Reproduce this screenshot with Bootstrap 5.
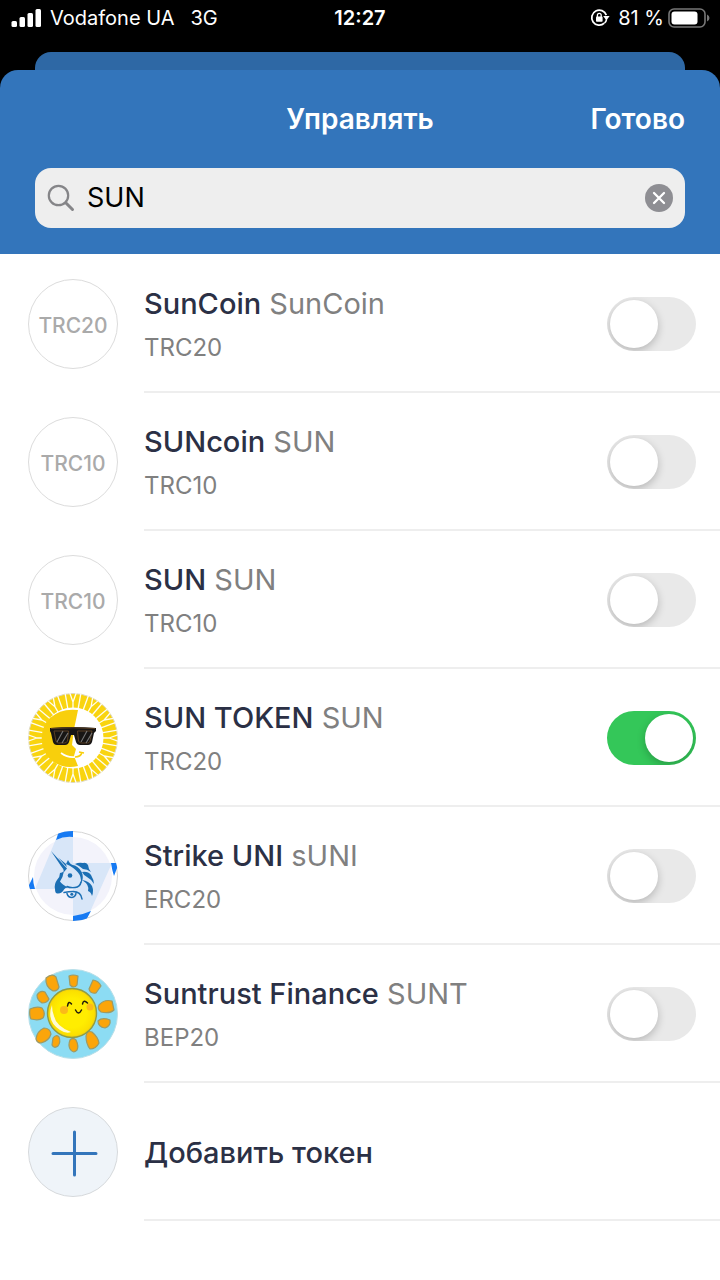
<!DOCTYPE html>
<html lang="ru">
<head>
<meta charset="utf-8">
<meta name="viewport" content="width=device-width, initial-scale=1">
<title>Управлять</title>
<link href="https://cdn.jsdelivr.net/npm/bootstrap@5.3.0/dist/css/bootstrap.min.css" rel="stylesheet">
<style>
  body { font-family: Inter, "Noto Sans", sans-serif; color: #2b3045; background: #fff; }
  svg { display: block; flex: none; }
  .top-zone { background: #000; }
  .status-bar { height: 36px; font-size: 20px; line-height: 36px; padding: 0 10px; color: #fff; }
  .status-side { flex: 1 1 0; }
  .back-sheet { height: 18px; margin: 0 35px; background: #2e68a5; border-radius: 16px 16px 0 0; }
  .sheet-head { background: #3375bb; border-radius: 18px 18px 0 0; padding: 26px 35px; }
  .sheet-bar { display: grid; grid-template-columns: 1fr auto 1fr; height: 46px; font-size: 28px; line-height: 46px; font-weight: 600; color: #fff; }
  .sheet-bar h1, .sheet-bar button { font: inherit; color: inherit; }
  .search-box { height: 60px; margin-top: 26px; padding: 0 12px; background: #eee; border-radius: 16px; }
  .search-box input { font-size: 27px; color: #000; margin-left: 12px; outline: 0; min-width: 0; }
  .token-row { padding-left: 28px; }
  .token-list { padding-top: 1px; }
  .token-line { height: 138px; margin-left: 26px; padding-right: 24px; border-bottom: 2px solid #eee; }
  .coin { width: 90px; height: 90px; flex: none; border: 1px solid #dcdcdc; border-radius: 50%; color: #aaa; font-size: 21px; font-weight: 500; padding-top: 4px; }
  .token-line label, .token-line button { padding-top: 3px; }
  .token-name { font-size: 29px; line-height: 40px; }
  .token-name b { font-weight: 500; }
  .token-name span, .token-type { color: #808080; }
  .token-type { font-size: 24px; line-height: 34px; margin-top: 7px; }
  .form-check-input.toggle { width: 89px; height: 54px; margin: 2px 0 0; padding: 3px; border: 0; border-radius: 27px; background: #e9e9e9; flex: none; overflow: hidden; }
  .toggle::before { content: ""; display: block; width: 48px; height: 48px; border-radius: 50%; background: #fff; box-shadow: 0 3px 8px #00000038; }
  .form-check-input.toggle:checked { background: #34c759; }
  .toggle:checked::before { margin-left: 35px; }
</style>
</head>
<body>
<header class="top-zone">
  <div class="status-bar d-flex align-items-center">
    <div class="status-side d-flex align-items-center">
      <svg width="32" height="20" viewBox="0 0 32 20" fill="#fff" aria-hidden="true"><rect x="1.500" y="13" width="5.500" height="6" rx="1.5"/><rect x="9.500" y="9" width="5.500" height="10" rx="1.5"/><rect x="17.500" y="5" width="5.500" height="14" rx="1.5"/><rect x="25.500" y="1" width="5.500" height="18" rx="1.5"/></svg>
      <span class="ms-2">Vodafone UA</span><span class="ms-3">3G</span>
    </div>
    <strong class="fw-semibold">12:27</strong>
    <div class="status-side d-flex align-items-center justify-content-end">
      <svg width="20" height="20" viewBox="0 0 20 20" aria-hidden="true"><path d="M14.3 15.2A7.5 7.5 0 1 1 16.3 7.1" fill="none" stroke="#fff" stroke-width="1.8"/><path d="M13.2 8.1h6.4l-3.2 4.4z" fill="#fff"/><path d="M14.5 15q1.8-1.5 2-3.5" fill="none" stroke="#fff" stroke-width="1.6"/><rect x="6" y="8.6" width="6.6" height="5.2" rx=".8" fill="#fff"/><path d="M7.4 9V7.2a1.9 1.9 0 0 1 3.8 0V9" fill="none" stroke="#fff" stroke-width="1.3"/></svg>
      <span class="ms-2 me-1 text-nowrap">81 %</span>
      <svg width="42" height="20" viewBox="0 0 42 20" aria-hidden="true"><rect x="1" y="1" width="36" height="18" rx="5" fill="none" stroke="#777" stroke-width="1.6"/><rect x="3.5" y="3.5" width="26" height="13" rx="3" fill="#fff"/><path d="M39 6.5q2.5 1 2.5 3.5T39 13.5z" fill="#777"/></svg>
    </div>
  </div>
  <div class="pt-3"><div class="back-sheet"></div></div>
  <div class="sheet-head">
    <div class="sheet-bar align-items-center">
      <span></span><h1 class="m-0">Управлять</h1>
      <button type="button" class="btn p-0 border-0 text-end">Готово</button>
    </div>
    <div class="search-box d-flex align-items-center">
      <svg width="28" height="28" viewBox="0 0 28 28" fill="none" stroke="#858588" aria-hidden="true"><circle cx="11.5" cy="11.5" r="9.7" stroke-width="2.2"/><path d="M19 19l6.5 6.5" stroke-width="3" stroke-linecap="round"/></svg>
      <input type="text" value="SUN" aria-label="Поиск" class="flex-grow-1 border-0 bg-transparent p-0">
      <button type="button" class="btn p-0 border-0" aria-label="Очистить"><svg width="28" height="28" viewBox="0 0 28 28"><circle cx="14" cy="14" r="14" fill="#8e8e93"/><path d="M9 9l10 10M19 9L9 19" stroke="#fff" stroke-width="2.3" stroke-linecap="round"/></svg></button>
    </div>
  </div>
</header>

<main>
<ul class="token-list list-unstyled m-0">
  <li class="token-row d-flex align-items-center">
    <div class="coin d-flex align-items-center justify-content-center">TRC20</div>
    <div class="token-line d-flex align-items-center flex-grow-1">
      <label class="flex-grow-1" for="t1"><span class="token-name d-block text-reset"><b>SunCoin</b> <span>SunCoin</span></span><span class="token-type d-block">TRC20</span></label>
      <input class="form-check-input toggle" type="checkbox" role="switch" id="t1">
    </div>
  </li>
  <li class="token-row d-flex align-items-center">
    <div class="coin d-flex align-items-center justify-content-center">TRC10</div>
    <div class="token-line d-flex align-items-center flex-grow-1">
      <label class="flex-grow-1" for="t2"><span class="token-name d-block text-reset"><b>SUNcoin</b> <span>SUN</span></span><span class="token-type d-block">TRC10</span></label>
      <input class="form-check-input toggle" type="checkbox" role="switch" id="t2">
    </div>
  </li>
  <li class="token-row d-flex align-items-center">
    <div class="coin d-flex align-items-center justify-content-center">TRC10</div>
    <div class="token-line d-flex align-items-center flex-grow-1">
      <label class="flex-grow-1" for="t3"><span class="token-name d-block text-reset"><b>SUN</b> <span>SUN</span></span><span class="token-type d-block">TRC10</span></label>
      <input class="form-check-input toggle" type="checkbox" role="switch" id="t3">
    </div>
  </li>
  <li class="token-row d-flex align-items-center">
    <svg width="90" height="90" viewBox="0 0 90 90" aria-hidden="true">
      <defs><g id="ray" stroke="#fffdf0" fill="none" stroke-width="1.3"><path d="M45 16V8.500M45 9L41.800 0M45 9L48.200 0"/><path d="M45 16V0" transform="rotate(10 45 45)"/><path d="M45 16V0" transform="rotate(20 45 45)"/></g></defs>
      <circle cx="45" cy="45" r="44.5" fill="#f9d40f" stroke="#ddd8c4"/>
      <g><use href="#ray"/><use href="#ray" transform="rotate(30 45 45)"/><use href="#ray" transform="rotate(60 45 45)"/><use href="#ray" transform="rotate(90 45 45)"/><use href="#ray" transform="rotate(120 45 45)"/><use href="#ray" transform="rotate(150 45 45)"/><use href="#ray" transform="rotate(180 45 45)"/><use href="#ray" transform="rotate(210 45 45)"/><use href="#ray" transform="rotate(240 45 45)"/><use href="#ray" transform="rotate(270 45 45)"/><use href="#ray" transform="rotate(300 45 45)"/><use href="#ray" transform="rotate(330 45 45)"/></g>
      <circle cx="45" cy="45" r="30.5" fill="#fff"/>
      <path d="M50 17Q48 27 46 36L44 52l4 4-2 7 4 10Q34 77 22 66C10 54 12 34 22 25Q33 15 50 17z" fill="#f8cf0c"/>
      <path d="M33 60q7 5 14 4" fill="none" stroke="#fff" stroke-width="1.6"/><path d="M47 64q6 0 7-5M51 59l5 1" fill="none" stroke="#f8cf0c" stroke-width="1.6"/>
      <path d="M22 35Q45 33 68 35V38l-2 2-2 9q-1 3-4 3h-8q-3 0-4-3l-2-7h-3l-2 7q-1 3-4 3h-8q-3 0-4-3l-2-9-1-2z" fill="#171514"/>
      <path d="M23 35.5Q45 34 67 35.5M26 38h14.5l-1 10q-1 2-3 2h-6q-2 0-2.5-2zM64 38H49.5l1 10q1 2 3 2h6q2 0 2.5-2z" fill="none" stroke="#5a3f22"/>
      <path d="M29 49l6-11M34 50l6-10M53 49l6-11M58 50l6-10" stroke="#777" stroke-width="1.1"/>
    </svg>
    <div class="token-line d-flex align-items-center flex-grow-1">
      <label class="flex-grow-1" for="t4"><span class="token-name d-block text-reset"><b>SUN TOKEN</b> <span>SUN</span></span><span class="token-type d-block">TRC20</span></label>
      <input class="form-check-input toggle" type="checkbox" role="switch" id="t4" checked>
    </div>
  </li>
  <li class="token-row d-flex align-items-center">
    <svg width="90" height="90" viewBox="0 0 90 90" aria-hidden="true">
      <defs><clipPath id="disc"><circle cx="45" cy="45" r="45"/></clipPath></defs>
      <circle cx="45" cy="45" r="44.5" fill="#fff" stroke="#d5d5d5"/><circle cx="45" cy="45" r="39" fill="#f3f3fb"/>
      <path d="M28 8Q36 5 45 5V58H7zM45 32H84L62 81Q54 84 45 85z" fill="#d8e6f8"/>
      <g clip-path="url(#disc)" fill="#167af3"><path d="M31 0H45V6Q36 5 28 9zM5 46Q5 52 7 58H-1zM83 32H91L86 45Q84 39 83 32zM45 85Q54 84 63 80L57 91H45z"/></g>
      <g fill="#1b6fb4">
        <path d="M23 20L39 37.5l-3 3.500q0-3-3-6zM30 26.500l8 6.500.8 3.200z"/>
        <path d="M36 40q-2 2-4 2 0 4-3 7-3 4-2 9 0 5 3 4.500 4 0 6-4 1-2 4-2-6-3-8-6 3-4 4-10.500z"/>
        <path d="M38 33l2-4q2 5 7 5.500 6 3 7.500 9 1 5-1.500 9 .5-7-3-11-4-5-12-8.500z"/>
        <path d="M47 33q4-2 8-1 3-1 5 2l1 4 2 3q-4-3-8-3-3-3-8-5z"/>
        <path d="M54 41q6-1 9 3 3 5 3 9-3-5-7-7-3-1-5-5z"/>
        <path d="M54 49q7 1 10 6 2 5 0 10-1-4-4-5 2-6-6-11z"/>
      </g>
      <path d="M53 51q-1 5-6 5.500-5 .5-8-1M36 61.500q5-1 9-1 8 0 9 7.500M39 62.500q1 4 5 4 4-1 4-5" fill="none" stroke="#1b6fb4" stroke-width="1.5" stroke-linecap="round"/>
      <circle cx="42" cy="44.5" r="2.3" fill="#1b6fb4"/><circle cx="43.800" cy="63.200" r="1.5" fill="#1b6fb4"/>
    </svg>
    <div class="token-line d-flex align-items-center flex-grow-1">
      <label class="flex-grow-1" for="t5"><span class="token-name d-block text-reset"><b>Strike UNI</b> <span>sUNI</span></span><span class="token-type d-block">ERC20</span></label>
      <input class="form-check-input toggle" type="checkbox" role="switch" id="t5">
    </div>
  </li>
  <li class="token-row d-flex align-items-center">
    <svg width="90" height="90" viewBox="0 0 90 90" aria-hidden="true">
      <defs><radialGradient id="face"><stop offset=".6" stop-color="#ffed00"/><stop offset=".9" stop-color="#fbe000"/><stop offset="1" stop-color="#efcb10"/></radialGradient></defs>
      <circle cx="45" cy="45" r="44.5" fill="#8cdcf3" stroke="#b9dfe8"/>
      <g fill="#fba50b" stroke="#9d9a66" stroke-width="1.2" stroke-linejoin="round">
        <path d="M18 9q6-5 10-1l3 10q-1 4-6 4-8-4-7-13z"/>
        <path d="M41 7q4-2 9 0l-1 9q-3 4-7 0z"/>
        <path d="M65 11q6 1 8 6l-5 7q-6 1-7-4z"/>
        <path d="M9 26q3-5 8-3l4 7q-2 4-7 4-5-3-5-8z"/>
        <path d="M2 40q7-3 12-1 4 5 1 10-4 3-12 1-2-4-1-10z"/>
        <path d="M71 36q5-6 13-4l2 9q-4 4-13 2-4-3-2-7z"/>
        <path d="M70 52q4-4 12-1 1 6-5 8-7-1-7-7z"/>
        <path d="M8 70q1-8 8-11 6 0 7 6-2 7-10 9-4 0-5-4z"/>
        <path d="M25 69q3-4 6-1 2 5-1 9-4 3-6-1z"/>
        <path d="M42 71q3-3 6 0 3 6 1 10-4 4-7-1-2-4 0-9z"/>
        <path d="M58 67q1-6 6-4 6 5 7 11-3 6-9 6-4-5-4-13z"/>
      </g>
      <circle cx="44" cy="44" r="24.5" fill="url(#face)" stroke="#8e9c45" stroke-width="1.4"/>
      <path d="M24 36Q18 52 32 61q6 4 11 2-15-6-17-16-2-5-2-11z" fill="#fffbd5"/>
      <circle cx="36" cy="41" r="4" fill="#fbba18"/><circle cx="62" cy="38" r="3.5" fill="#fbba18"/>
      <path d="M39.5 37q1-6 4-2M54.500 35q1-5 5-1M47.500 41q3 6 6 0" fill="none" stroke="#211c0c" stroke-width="1.5" stroke-linecap="round"/>
    </svg>
    <div class="token-line d-flex align-items-center flex-grow-1">
      <label class="flex-grow-1" for="t6"><span class="token-name d-block text-reset"><b>Suntrust Finance</b> <span>SUNT</span></span><span class="token-type d-block">BEP20</span></label>
      <input class="form-check-input toggle" type="checkbox" role="switch" id="t6">
    </div>
  </li>
  <li class="token-row d-flex align-items-center">
    <svg width="90" height="90" viewBox="0 0 90 90" aria-hidden="true"><circle cx="45" cy="45" r="44.5" fill="#eff4f9" stroke="#d6d9dc"/><path d="M46.5 25v43M25 46.5h43" stroke="#3375bb" stroke-width="3" stroke-linecap="round"/></svg>
    <div class="token-line d-flex align-items-center flex-grow-1">
      <button type="button" class="btn px-0 pb-0 border-0 token-name text-reset text-start flex-grow-1"><b>Добавить токен</b></button>
    </div>
  </li>
</ul>
</main>
<script src="https://cdn.jsdelivr.net/npm/bootstrap@5.3.0/dist/js/bootstrap.bundle.min.js"></script>
</body>
</html>
